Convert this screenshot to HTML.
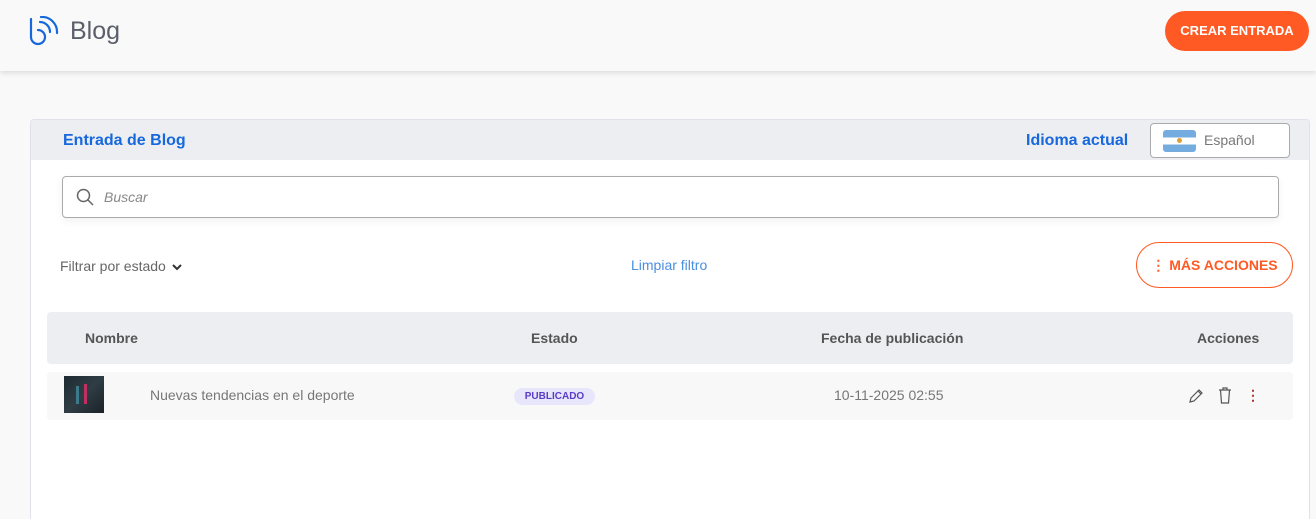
<!DOCTYPE html>
<html style="width:1316px;height:519px;overflow:hidden"><head><meta charset="utf-8"><style>
*{box-sizing:border-box;margin:0;padding:0}
body{width:1316px;height:519px;overflow:hidden;background:#f9f9f9;font-family:"Liberation Sans",sans-serif;position:relative}
.top{position:absolute;left:0;top:0;width:1316px;height:71px;background:#f9f9f9;box-shadow:0 2px 5px rgba(0,0,0,.12)}
.abs{position:absolute}
.card{position:absolute;left:30px;top:119px;width:1280px;height:405px;background:#fff;border:1px solid #dfe2ea;border-radius:4px;overflow:hidden}
.chead{position:absolute;left:0;top:0;width:100%;height:40px;background:#eceef2}
.blue{color:#1668dc;font-weight:bold;font-size:16px}
.th{font-size:14px;font-weight:bold;color:#555}
</style></head><body>
<div class="top">
<svg class="abs" style="left:28px;top:16px" width="34" height="32" viewBox="0 0 34 32" fill="none" stroke="#1668dc" stroke-width="2.2" stroke-linecap="round">
<path d="M3 3 V21 A7 7 0 1 0 10 14"/><path d="M12 6 A10 10 0 0 1 22 16"/><path d="M13 1 A15 15 0 0 1 29 17"/>
</svg>
<div class="abs" style="left:70px;top:17px;font-size:25px;color:#5a5f6b">Blog</div>
<div class="abs" style="left:1165px;top:11px;width:144px;height:40px;border-radius:20px;background:#ff5a24;color:#fff;font-size:13px;font-weight:bold;text-align:center;line-height:40px">CREAR ENTRADA</div>
</div>
<div class="card">
<div class="chead"></div>
<div class="abs blue" style="left:32px;top:12px">Entrada de Blog</div>
<div class="abs blue" style="left:995px;top:12px">Idioma actual</div>
<div class="abs" style="left:1119px;top:3px;width:140px;height:35px;background:#fff;border:1px solid #aaa;border-radius:4px">
 <div class="abs" style="left:12px;top:6px;width:33px;height:22px;border-radius:3px;background:linear-gradient(#74acdf 0 33%,#fff 33% 67%,#74acdf 67%)"><div class="abs" style="left:14px;top:8px;width:5px;height:5px;border-radius:50%;background:#e0a030"></div></div>
 <div class="abs" style="left:53px;top:8px;font-size:14px;color:#777">Español</div>
</div>
<div class="abs" style="left:31px;top:56px;width:1217px;height:42px;border:1px solid #aaa;border-radius:4px;box-shadow:0 3px 8px rgba(0,0,0,.06)">
 <svg class="abs" style="left:13px;top:11px" width="18" height="18" viewBox="0 0 18 18" fill="none" stroke="#666" stroke-width="1.5"><circle cx="7.5" cy="7.5" r="6"/><path d="M12 12 L17 17"/></svg>
 <div class="abs" style="left:41px;top:12px;font-size:14px;font-style:italic;color:#888">Buscar</div>
</div>
<div class="abs" style="left:29px;top:138px;font-size:14px;color:#666">Filtrar por estado</div>
<svg class="abs" style="left:141px;top:143px" width="10" height="8" viewBox="0 0 10 8" fill="none" stroke="#333" stroke-width="2"><path d="M1 2 L5 6 L9 2"/></svg>
<div class="abs" style="left:600px;top:137px;font-size:14px;color:#4a8fe0">Limpiar filtro</div>
<div class="abs" style="left:1105px;top:122px;width:157px;height:46px;border:1px solid #ff5a24;border-radius:23px;color:#ff5a24;font-size:14px;font-weight:bold;line-height:44px;text-align:center">⋮ MÁS ACCIONES</div>
<div class="abs" style="left:16px;top:192px;width:1246px;height:52px;background:#eceef2;border-radius:4px"></div>
<div class="abs th" style="left:54px;top:210px">Nombre</div>
<div class="abs th" style="left:500px;top:210px">Estado</div>
<div class="abs th" style="left:790px;top:210px">Fecha de publicación</div>
<div class="abs th" style="left:1166px;top:210px">Acciones</div>
<div class="abs" style="left:16px;top:252px;width:1246px;height:48px;background:#f8f8f8;border-radius:4px"></div>
<div class="abs" style="left:33px;top:256px;width:40px;height:37px;background:linear-gradient(135deg,#1d2a30,#2f3d45 50%,#1a2226)"><div class="abs" style="left:20px;top:8px;width:3px;height:20px;background:#c03060"></div><div class="abs" style="left:12px;top:10px;width:3px;height:18px;background:#3a7a8a"></div></div>
<div class="abs" style="left:119px;top:267px;font-size:14px;color:#777">Nuevas tendencias en el deporte</div>
<div class="abs" style="left:483px;top:268px;width:81px;height:17px;border-radius:9px;background:#e8e6fb;color:#5b3cc4;font-size:10px;font-weight:bold;text-align:center;line-height:17px">PUBLICADO</div>
<div class="abs" style="left:803px;top:267px;font-size:14px;color:#777">10-11-2025 02:55</div>
<svg class="abs" style="left:1157px;top:268px" width="16" height="16" viewBox="0 0 16 16" fill="none" stroke="#555" stroke-width="1.2"><path d="M2 14 L3 10 L11 2 L14 5 L6 13 Z M10 3 L13 6"/></svg>
<svg class="abs" style="left:1187px;top:267px" width="14" height="17" viewBox="0 0 14 17" fill="none" stroke="#555" stroke-width="1.2"><path d="M1 3 H13 M5 3 V1 H9 V3 M2.5 3 L3.5 16 H10.5 L11.5 3"/></svg>
<div class="abs" style="left:1215px;top:267px;font-size:14px;color:#a33;font-weight:bold">⋮</div>
</div>
</body></html>
